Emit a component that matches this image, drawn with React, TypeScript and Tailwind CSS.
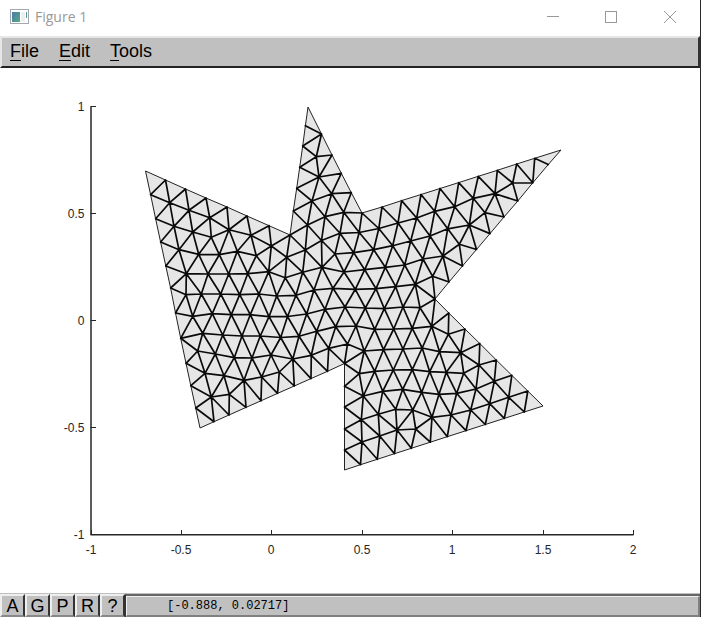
import { useState } from "react";

type Point = [number, number];
type Triangle = [number, number, number];

// outline of the domain, walked clockwise from the top left corner
const boundary: Point[] = [
    [145.5, 171], [165.5, 180], [185.5, 189], [206, 198], [227, 207], [247, 216], [269, 225.7],
    [290, 235], [293.3, 211], [296.7, 188.3], [299.7, 167.3], [302.7, 146], [305.4, 125.7],
    [308, 107], [321.5, 134], [332, 155], [341.3, 173.3], [351.3, 192.7],
    [362, 213], [382, 207], [401.6, 200.6], [421, 194.5], [440, 188.5], [458.7, 182.6], [478.3, 176.3], [497.3, 170.3], [516.7, 164], [534.7, 158.3],
    [561, 150], [548.3, 164.5], [532.8, 182.8], [517.8, 201], [504, 217], [490, 233.6], [476.5, 249.5], [462.5, 266], [449, 282],
    [435, 299], [448.8, 313], [465, 329], [479.8, 343.5], [496.3, 360], [511.8, 375.3], [527.8, 391],
    [543, 406], [524.3, 412], [504.3, 418.4], [485.3, 424.5], [466, 430.7], [447.3, 436.7], [430.3, 442.2], [411.3, 448.3], [394.5, 453.7], [377.3, 459.3], [360.5, 464.7],
    [344.5, 470], [344.5, 450], [344.5, 429], [344.5, 407], [344.5, 386.3],
    [344.5, 363.5], [327.5, 371.3], [311, 378.6], [294.3, 386], [277.5, 393.4], [261, 400.8], [246, 407.4], [229, 415], [214, 421.7],
    [200, 428], [195.7, 408], [190.8, 385.7], [186, 363.3], [180.7, 338.3], [175.5, 313], [170.6, 288], [165.8, 266], [160.6, 242], [155.6, 218.7], [150.6, 194.7],
];

const interior: Point[] = [
    [169.7, 202.7], [189, 210.3], [209.7, 217.7], [229, 229.7], [251, 235.3], [271.3, 246],
    [174, 226.3], [192.7, 232], [211.3, 237.3], [219.3, 254.7], [237.3, 251.3], [256.3, 255.7], [286.7, 257.3],
    [179, 249.7], [198.7, 254.3],
    [186.3, 273.7], [208, 274], [228.7, 274], [247.7, 273.7], [268.7, 271.7], [285.2, 277.8],
    [186, 294.7], [201.3, 294], [220.7, 294], [239.7, 294.7], [259, 294], [276.7, 296],
    [192.7, 316.3], [212.3, 313.7], [231.3, 314.7], [250.3, 314.7], [269, 316.7], [287.5, 316.5],
    [202.7, 333.3], [222.7, 335], [242, 336], [260.3, 336], [280.7, 337.5],
    [197.7, 351], [215.3, 354], [234.3, 357.7], [252, 358], [271, 355], [292.8, 359],
    [205, 373.3], [224, 375.7], [244, 380.3], [261.7, 377], [279.3, 372],
    [211.3, 397], [229.3, 394.3],
    [316.3, 156.7], [319, 177], [331.7, 193.7], [312, 201], [343.7, 212.3], [325, 216.7], [307.5, 225],
    [378.8, 228.5], [398, 223], [416.7, 218], [359.2, 232.5], [340, 233.3], [321.5, 240.5],
    [430, 236], [410.7, 241], [392.7, 245.7], [373.7, 249.7], [353.7, 252.7], [335, 254], [305.3, 250],
    [322, 267.3], [302.7, 272.3], [344, 272], [364.7, 269.7], [385.3, 267.3], [404.7, 265], [423, 259], [443, 256],
    [432.6, 276.3], [415.3, 284.3], [395.7, 286.7], [376, 288.7], [355.3, 289.3], [333, 288.3], [314, 290], [296, 295.3],
    [306.7, 314], [325, 309.3], [345, 307], [365.3, 308], [384.3, 308.7], [403, 307], [420, 307.7],
    [431.7, 326.3], [412.3, 328.3], [393.7, 329], [374.7, 329.3], [356, 326], [335.7, 326.7], [316.7, 331.3], [299, 336.3],
    [448.3, 334.3], [439.5, 351.7], [422.2, 348], [403, 349], [383.5, 349.7], [364.2, 351], [347.5, 344], [328.7, 348.3], [311.3, 355.3],
    [434.7, 211.3], [454.7, 206.7], [473.3, 198.3], [495, 193.7], [512.7, 183],
    [447.7, 228.8], [469.3, 225], [485, 212.7], [459.3, 244.3],
    [460.7, 352.7], [359.3, 373.7], [374.7, 371.3], [393.3, 370], [412.3, 369.7], [429.7, 371.7], [446.3, 372.3], [463.7, 373.3], [479, 365],
    [363.3, 396], [382.7, 391.3], [402.7, 389.3], [421.7, 392.3], [439, 394.3], [456.7, 393.3], [476, 389], [494.3, 381.3],
    [361.3, 419.7], [378.3, 414.3], [395.7, 409.3], [412.7, 410], [432, 417.3], [451, 415], [470.7, 410], [489.7, 403.7], [508.7, 397.3],
    [362, 442], [379.7, 436], [397, 430], [415.7, 429],
];

const points = [...boundary, ...interior];

function inCircle(p: Point, a: Point, b: Point, c: Point) {
    const d = 2 * (a[0] * (b[1] - c[1]) + b[0] * (c[1] - a[1]) + c[0] * (a[1] - b[1]));
    const a2 = a[0] ** 2 + a[1] ** 2;
    const b2 = b[0] ** 2 + b[1] ** 2;
    const c2 = c[0] ** 2 + c[1] ** 2;
    const ux = (a2 * (b[1] - c[1]) + b2 * (c[1] - a[1]) + c2 * (a[1] - b[1])) / d;
    const uy = (a2 * (c[0] - b[0]) + b2 * (a[0] - c[0]) + c2 * (b[0] - a[0])) / d;
    return Math.hypot(p[0] - ux, p[1] - uy) < Math.hypot(a[0] - ux, a[1] - uy);
}

function inside(x: number, y: number) {
    let hit = false;
    for (let i = 0, j = boundary.length - 1; i < boundary.length; j = i++) {
        const [xi, yi] = boundary[i];
        const [xj, yj] = boundary[j];
        if (yi > y !== yj > y && x < ((xj - xi) * (y - yi)) / (yj - yi) + xi) {
            hit = !hit;
        }
    }
    return hit;
}

// edges that occur in only one of the given triangles, and those that two share
function splitEdges(triangles: Triangle[]) {
    const single = new Map<string, [number, number]>();
    const shared: [number, number][] = [];
    triangles.forEach((t) => {
        for (let k = 0; k < 3; k++) {
            const a = Math.min(t[k], t[(k + 1) % 3]);
            const b = Math.max(t[k], t[(k + 1) % 3]);
            const key = `${a}-${b}`;
            if (single.delete(key)) {
                shared.push([a, b]);
            } else {
                single.set(key, [a, b]);
            }
        }
    });
    return { single: [...single.values()], shared };
}

// Bowyer-Watson, then drop everything outside of the outline
function triangulate(): Triangle[] {
    const n = points.length;
    const all: Point[] = [...points, [-9000, -8000], [9500, -8000], [300, 12000]];
    let triangles: Triangle[] = [[n, n + 1, n + 2]];

    for (let i = 0; i < n; i++) {
        const bad = triangles.filter((t) => inCircle(all[i], all[t[0]], all[t[1]], all[t[2]]));
        triangles = triangles.filter((t) => !bad.includes(t));
        splitEdges(bad).single.forEach(([a, b]) => triangles.push([a, b, i]));
    }

    return triangles.filter((t) => {
        if (t.some((v) => v >= n)) return false;
        const [a, b, c] = t.map((v) => all[v]);
        const area = Math.abs((b[0] - a[0]) * (c[1] - a[1]) - (c[0] - a[0]) * (b[1] - a[1])) / 2;
        return area > 15 && inside((a[0] + b[0] + c[0]) / 3, (a[1] + b[1] + c[1]) / 3);
    });
}

const outline = boundary.map((p) => p.join(",")).join(" ");
const meshPath = splitEdges(triangulate())
    .shared.map(([a, b]) => `M${points[a].join(" ")}L${points[b].join(" ")}`)
    .join("");

const xTicks = [-1, -0.5, 0, 0.5, 1, 1.5, 2];
const yTicks = [-1, -0.5, 0, 0.5, 1];
const toX = (v: number) => Math.floor(91 + (v + 1) * 180.9) + 0.5;
const toY = (v: number) => Math.round(534 - (v + 1) * 214) + 0.5;

function AppIcon() {
    return (
        <svg width="19" height="15" viewBox="0 0 19 15" aria-hidden="true">
            <defs>
                <linearGradient id="pane" x1="0" y1="0" x2="1" y2="1">
                    <stop offset="0" stopColor="#4a7da8" />
                    <stop offset="1" stopColor="#58a883" />
                </linearGradient>
            </defs>
            <rect x="0.5" y="0.5" width="18" height="14" fill="#fff" stroke="#a3a8b0" />
            <rect x="2" y="3" width="8" height="10" fill="url(#pane)" />
            <rect x="11" y="3" width="4" height="10" fill="#efefef" />
            <rect x="16" y="3" width="1" height="6" fill="#559a92" />
        </svg>
    );
}

function TitleBar() {
    return (
        <header className="flex h-9 items-center justify-between bg-white pl-2.5">
            <div className="flex items-center gap-1.5 pb-1">
                <AppIcon />
                <h1 className="pt-px font-['Open_Sans',sans-serif] text-sm text-[#999]">Figure 1</h1>
            </div>
            <div className="flex pb-0.5 text-[#999]">
                <button type="button" aria-label="Minimize" className="flex w-[58px] justify-center">
                    <svg width="12" height="12" viewBox="0 0 12 12" stroke="currentColor">
                        <path d="M0 5.5h12" />
                    </svg>
                </button>
                <button type="button" aria-label="Maximize" className="flex w-[58px] justify-center">
                    <svg width="12" height="12" viewBox="0 0 12 12" stroke="currentColor" fill="none">
                        <rect x="0.5" y="0.5" width="11" height="11" />
                    </svg>
                </button>
                <button type="button" aria-label="Close" className="flex w-[60px] justify-center">
                    <svg width="12" height="12" viewBox="0 0 12 12" stroke="currentColor">
                        <path d="M0 0l12 12M12 0L0 12" />
                    </svg>
                </button>
            </div>
        </header>
    );
}

function MenuBar() {
    return (
        <nav className="flex h-8 items-center gap-5 border-2 border-t-[#e6e6e6] border-r-[#333] border-b-[#222] border-l-[#e6e6e6] bg-[#c0c0c0] pb-0.5 pl-2 text-lg leading-5 text-black">
            {["File", "Edit", "Tools"].map((item) => (
                <button type="button" key={item}>
                    <span className="underline decoration-1 underline-offset-3">{item[0]}</span>
                    {item.slice(1)}
                </button>
            ))}
        </nav>
    );
}

function Plot() {
    return (
        <svg
            viewBox="0 68 700 525"
            className="w-full"
            role="img"
            aria-label="Triangle mesh"
            fontFamily="'Liberation Sans', sans-serif"
            fontSize="12"
        >
            <polygon points={outline} fill="#e6e6e6" stroke="#222" strokeWidth="1" />
            <path d={meshPath} fill="none" stroke="#0a0a0a" strokeWidth="1.7" strokeLinecap="round" />
            <g stroke="#262626" fill="none">
                <path d={`M91 ${toY(1)}V534.5`} strokeWidth="1.5" />
                <path d={`M90.5 534.8H${toX(2)}`} strokeWidth="1.5" />
                {xTicks.map((v) => (
                    <path key={v} d={`M${toX(v)} 535v-5`} />
                ))}
                {yTicks.map((v) => (
                    <path key={v} d={`M90.5 ${toY(v)}h5.5`} />
                ))}
            </g>
            <g fill="#262626">
                {xTicks.map((v) => (
                    <text key={v} x={toX(v) - 0.5} y="554" textAnchor="middle">
                        {v}
                    </text>
                ))}
                {yTicks.map((v) => (
                    <text key={v} x="84.5" y={toY(v) + 4.5} textAnchor="end">
                        {v}
                    </text>
                ))}
            </g>
        </svg>
    );
}

const tools = [
    { label: "A", title: "Autoscale" },
    { label: "G", title: "Grid" },
    { label: "P", title: "Pan" },
    { label: "R", title: "Rotate" },
    { label: "?", title: "Help" },
];

function StatusBar({ position }: { position: string }) {
    const [active, setActive] = useState("");

    return (
        <footer className="flex h-6 border-t border-[#c0c0c0] bg-[#c0c0c0]">
            {tools.map(({ label, title }) => (
                <button
                    type="button"
                    key={label}
                    aria-label={title}
                    aria-pressed={active === label}
                    onClick={() => setActive(label)}
                    className="w-[25px] border-2 border-t-[#eee] border-r-[#333] border-b-[#888] border-l-[#eee] text-lg leading-5 text-black"
                >
                    {label}
                </button>
            ))}
            <div className="flex flex-1 border-t-2 border-l border-t-[#666] border-l-[#333]">
                <output className="flex flex-1 items-center border-t border-r-2 border-b-2 border-l border-t-[#eee] border-r-[#808080] border-b-[#808080] border-l-[#eee] pl-10 font-['Liberation_Mono',monospace] text-xs leading-4 text-black">
                    {position}
                </output>
            </div>
        </footer>
    );
}

export default function App() {
    return (
        <div className="flex min-h-screen flex-col border-r border-[#2b2b2b] bg-white font-['Liberation_Sans',sans-serif]">
            <TitleBar />
            <MenuBar />
            <main className="flex-1">
                <Plot />
            </main>
            <StatusBar position="[-0.888, 0.02717]" />
        </div>
    );
}
